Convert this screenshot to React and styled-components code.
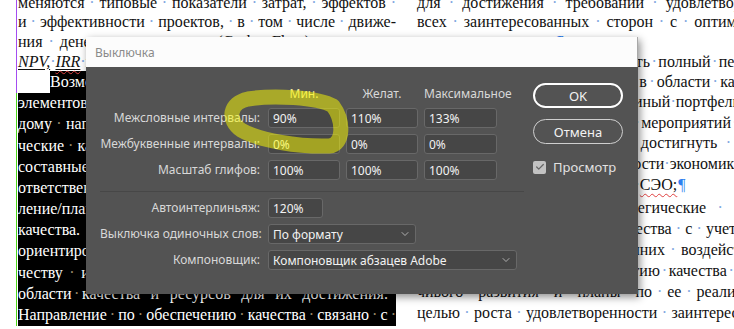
import React from 'react';
import styled, { createGlobalStyle } from 'styled-components';
import { ChevronDown, Check } from 'lucide-react';

const GlobalStyle = createGlobalStyle`
  html, body {
    margin: 0;
    padding: 0;
    background: #ffffff;
  }
  body {
    width: 734px;
    height: 329px;
    overflow: hidden;
  }
`;

// ---- document behind the dialog ----

const leftTop = [
  { t: 'меняются типовые показатели затрат, эффектов', trail: true },
  { t: 'и эффективности проектов, в том числе движе-' },
  { t: 'ния денежных потоков (Cash Flow), а также' },
];

const leftSel = [
  { t: 'элементов системы менеджмента качества по' },
  { t: 'дому направлению своей деятельности, стратеги-' },
  { t: 'ческие качества продукции, всех работ и услуг,' },
  { t: 'составные части процессов и лиц,' },
  { t: 'ответственных за их выполнение, управ-' },
  { t: 'ление/планирование и обеспечение' },
  { t: 'качества. Целевые показатели качества' },
  { t: 'ориентированы на удовлетворенность ка-' },
  { t: 'честву и надежности продукции и целям в' },
  { t: 'области качества и ресурсов для их достижения.', trail: true },
  { t: 'Направление по обеспечению качества связано с', trail: true },
];

const rightTop = [
  { t: 'для достижения требований удовлетворенности' },
  { t: 'всех заинтересованных сторон с оптимальными' },
  { t: 'затратами ресурсов.', end: true, left: true },
  { t: 'позволяет организации получить полный перечень и' },
];

const rightMid = [
  { t: 'знаний и опыта сотрудников в области качества и' },
  { t: 'своевременно сформировать единый портфель проекта' },
  { t: 'целевых программ развития и мероприятий качества' },
  { t: 'позволяющих организации достигнуть высоких' },
  { t: 'в сфере повышения эффективности экономики страны' },
  { t: 'и эффективности всей системы СЭО;', end: true, left: true, wavy: 'СЭО;' },
];

const rightLow = [
  { t: '– финансовые и стратегические средства,' },
  { t: 'обеспечения стабильного качества с учетом всех' },
  { t: 'рисков, внутренних и внешних воздействий на' },
  { t: 'определяющих единую стратегию качества и устой-' },
  { t: 'чивого развития и планы по ее реализации с' },
  { t: 'целью роста удовлетворенности заинтересованных' },
];

const Page = styled.div`
  position: relative;
  width: 734px;
  height: 329px;
  overflow: hidden;
  background: #ffffff;
`;

const Spread = styled.div`
  display: flex;
  gap: 21px;
  margin-top: -7px;
  padding-left: 16px;
  font-family: "Liberation Serif", "Times New Roman", serif;
  font-size: 16px;
`;

const Column = styled.div`
  width: 380px;
  flex-shrink: 0;
`;

const Frame = styled.div`
  border-left: 1px solid ${p => p.$edge};
  padding-left: 1px;
`;

const Para = styled.div`
  margin-top: ${p => p.$space || 0}px;
`;

const Line = styled.div`
  display: flex;
  align-items: center;
  justify-content: ${p => (p.$left ? 'flex-start' : 'space-between')};
  height: ${p => p.$lh || 19.6}px;
  white-space: nowrap;
  background: ${p => (p.$sel ? '#000000' : 'transparent')};
  color: ${p => (p.$sel ? '#ffffff' : '#111111')};
`;

const Dot = styled.span`
  color: ${p => (p.$sel ? '#9a8a6a' : '#7ea6e0')};
`;

const Pilcrow = styled.span`
  color: #2f7ff0;
  margin-left: 1px;
`;

const Indent = styled.span`
  align-self: stretch;
  width: 33px;
  background: #ffffff;
  margin-left: -1px;
`;

const Wavy = styled.span`
  text-decoration: underline wavy #e04040;
  text-decoration-thickness: 1px;
  text-underline-offset: 3px;
`;

const Finance = styled.span`
  font-style: italic;
  text-decoration: underline;
  text-underline-offset: 2px;
`;

const words = (text, sel, trail) => {
  const parts = text.split(' ');
  const out = [];
  parts.forEach((w, i) => {
    out.push(<span key={'w' + i}>{w}</span>);
    if (i < parts.length - 1 || trail) out.push(<Dot key={'d' + i} $sel={sel}>·</Dot>);
  });
  return out;
};

const DocLine = ({ line, sel, lh }) => (
  <Line $sel={sel} $left={line.left} $lh={lh}>
    {line.wavy ? (
      <>
        {words(line.t.replace(' ' + line.wavy, ''), sel)}
        <Dot $sel={sel}>·</Dot>
        <Wavy>{line.wavy}</Wavy>
      </>
    ) : (
      words(line.t, sel, line.trail)
    )}
    {line.end && <Pilcrow>¶</Pilcrow>}
  </Line>
);

// ---- dialog ----

const Dialog = styled.div`
  position: absolute;
  left: 86px;
  top: 37px;
  width: 552px;
  box-shadow: 2px 3px 8px rgba(0, 0, 0, 0.45);
  font-family: "Noto Sans", "Open Sans", sans-serif;
  font-size: 12px;
`;

const TitleBar = styled.div`
  height: 30px;
  box-sizing: border-box;
  display: flex;
  align-items: center;
  padding-left: 9px;
  background: #fcfcfc;
  border-right: 1px solid #a8a8a8;
  color: #8a8a8a;
`;

const Body = styled.div`
  display: flex;
  height: 227px;
  box-sizing: border-box;
  padding: 0 15px 0 14px;
  background: #535353;
`;

const Form = styled.div`
  flex: 1;
  padding-top: 19px;
`;

const Grid = styled.div`
  display: grid;
  grid-template-columns: 162px 72px 72px 73px;
  grid-template-rows: 16px 20px 20px 20px;
  column-gap: 6px;
  row-gap: 6px;
`;

const Header = styled.div`
  text-align: center;
  line-height: 16px;
  color: ${p => p.$tint || '#d8d8d8'};
  white-space: nowrap;
`;

const Label = styled.div`
  text-align: right;
  line-height: 20px;
  padding-right: 2px;
  color: #d8d8d8;
  white-space: nowrap;
`;

const Field = styled.div`
  box-sizing: border-box;
  height: 20px;
  width: ${p => (p.$w ? p.$w + 'px' : 'auto')};
  padding: 0 4px;
  display: flex;
  align-items: center;
  justify-content: space-between;
  background: #464646;
  border: 1px solid #686868;
  border-radius: 3px;
  color: #f2f2f2;
`;

const Rule = styled.div`
  width: 424px;
  height: 1px;
  margin: 11px 0 6px;
  background: #474747;
`;

const Rows = styled.div`
  display: grid;
  grid-template-columns: 162px auto;
  justify-content: start;
  column-gap: 6px;
  row-gap: 6px;
`;

const Side = styled.div`
  width: 90px;
  padding-top: 16px;
  display: flex;
  flex-direction: column;
  gap: 11px;
`;

const Button = styled.div`
  box-sizing: border-box;
  height: 25px;
  display: flex;
  align-items: center;
  justify-content: center;
  border: ${p => (p.$primary ? '2px solid #ffffff' : '1.5px solid #cfcfcf')};
  border-radius: 13px;
  color: #f2f2f2;
  font-size: 13px;
`;

const CheckRow = styled.div`
  display: flex;
  align-items: center;
  gap: 7px;
  margin-top: 3px;
  color: #e2e2e2;
  font-size: 13px;
`;

const Box = styled.span`
  width: 13px;
  height: 13px;
  border-radius: 2px;
  background: #c2c2c2;
  display: flex;
  align-items: center;
  justify-content: center;
`;

const Marker = styled.svg`
  position: absolute;
  left: 0;
  top: 0;
  pointer-events: none;
`;

const rows = [
  ['Межсловные интервалы:', '90%', '110%', '133%'],
  ['Межбуквенные интервалы:', '0%', '0%', '0%'],
  ['Масштаб глифов:', '100%', '100%', '100%'],
];

export default function App() {
  return (
    <Page>
      <GlobalStyle />
      <Spread>
        <Column>
          <Frame $edge="#a44cf0">
            {leftTop.map((l, i) => (
              <DocLine key={i} line={l} />
            ))}
            <Line $left>
              <Finance>NPV,</Finance>
              <Dot>·</Dot>
              <Finance>
                <Wavy>IRR</Wavy>
              </Finance>
              <Dot>·</Dot>
              <span>и срока окупаемости.</span>
            </Line>
            <Line $sel $left $lh={21.2}>
              <Indent />
              <span>Возможности улучшения</span>
            </Line>
          </Frame>
          <Frame $edge="#4cd61a">
            {leftSel.map((l, i) => (
              <DocLine key={i} line={l} sel lh={21.2} />
            ))}
          </Frame>
        </Column>
        <Column>
          <Para>
            {rightTop.map((l, i) => (
              <DocLine key={i} line={l} />
            ))}
          </Para>
          <Para>
            {rightMid.map((l, i) => (
              <DocLine key={i} line={l} lh={20.6} />
            ))}
          </Para>
          <Para $space={2}>
            {rightLow.map((l, i) => (
              <DocLine key={i} line={l} lh={21.2} />
            ))}
          </Para>
        </Column>
      </Spread>

      <Dialog>
        <TitleBar>Выключка</TitleBar>
        <Body>
          <Form>
            <Grid>
              <span />
              <Header $tint="#eee69a">Мин.</Header>
              <Header>Желат.</Header>
              <Header>Максимальное</Header>
              {rows.map(r => (
                <React.Fragment key={r[0]}>
                  <Label>{r[0]}</Label>
                  <Field>{r[1]}</Field>
                  <Field>{r[2]}</Field>
                  <Field>{r[3]}</Field>
                </React.Fragment>
              ))}
            </Grid>
            <Rule />
            <Rows>
              <Label>Автоинтерлиньяж:</Label>
              <Field $w={55}>120%</Field>
              <Label>Выключка одиночных слов:</Label>
              <Field $w={148}>
                По формату
                <ChevronDown size={12} strokeWidth={1.5} color="#d0d0d0" />
              </Field>
              <Label>Компоновщик:</Label>
              <Field $w={249}>
                Компоновщик абзацев Adobe
                <ChevronDown size={12} strokeWidth={1.5} color="#d0d0d0" />
              </Field>
            </Rows>
          </Form>
          <Side>
            <Button $primary>OK</Button>
            <Button>Отмена</Button>
            <CheckRow>
              <Box>
                <Check size={10} strokeWidth={3} color="#666666" />
              </Box>
              Просмотр
            </CheckRow>
          </Side>
        </Body>
      </Dialog>

      <Marker width="734" height="329" viewBox="0 0 734 329">
        <path
          d="M 333 106 C 318 97, 272 95, 248 99 C 229 103, 227 120, 241 130 C 260 141, 300 147, 329 146 C 344 145, 344 121, 333 106"
          fill="none"
          stroke="rgba(255, 255, 0, 0.5)"
          strokeWidth="15"
          strokeLinecap="round"
        />
      </Marker>
    </Page>
  );
}
